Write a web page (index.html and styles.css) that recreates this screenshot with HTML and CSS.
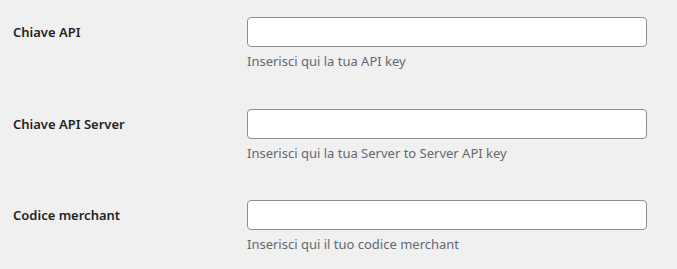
FILE: index.html
```html
<!DOCTYPE html>
<html lang="it">
<head>
<meta charset="utf-8">
<title>Impostazioni</title>
<link rel="stylesheet" href="styles.css">
</head>
<body>
<div class="form-table">
  <div class="row">
    <label class="label" for="api">Chiave API</label>
    <div class="field">
      <input id="api" class="text-input" type="text">
      <p class="description">Inserisci qui la tua API key</p>
    </div>
  </div>
  <div class="row">
    <label class="label" for="server">Chiave API Server</label>
    <div class="field">
      <input id="server" class="text-input" type="text">
      <p class="description">Inserisci qui la tua Server to Server API key</p>
    </div>
  </div>
  <div class="row">
    <label class="label" for="merchant">Codice merchant</label>
    <div class="field">
      <input id="merchant" class="text-input" type="text">
      <p class="description">Inserisci qui il tuo codice merchant</p>
    </div>
  </div>
</div>
</body>
</html>
```
FILE: styles.css
```css
html, body {
  margin: 0;
  padding: 0;
  background: #f0f0f1;
}
body {
  font-family: "Noto Sans", "Open Sans", sans-serif;
  color: #1d2327;
}
.form-table {
  display: grid;
  grid-template-rows: 91.5px 91.5px auto;
  padding: 17px 0 0 13px;
}
.row {
  display: grid;
  grid-template-columns: 234px 400px;
  align-items: start;
}
.label {
  font-size: 13px;
  font-weight: 600;
  line-height: 18px;
  padding-top: 6px;
  color: #1d2327;
}
.field {
  display: flex;
  flex-direction: column;
}
.text-input {
  box-sizing: border-box;
  width: 400px;
  height: 30px;
  margin: 0;
  padding: 0 8px;
  background: #fff;
  border: 1px solid #8c8f94;
  border-radius: 4px;
  font: inherit;
}
.description {
  margin: 5px 0 0;
  font-size: 13px;
  line-height: 19px;
  color: #646970;
}
```
